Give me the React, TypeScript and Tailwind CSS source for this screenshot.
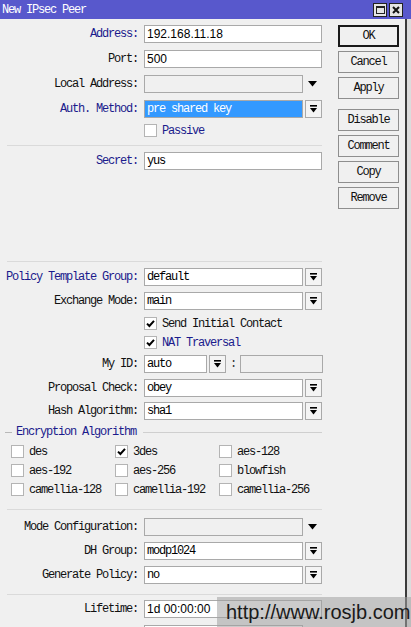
const mono = "font-['Liberation_Mono',monospace] text-[12px] tracking-[-1.2px] leading-none";
const sans = "font-['Liberation_Sans',Arial,sans-serif] text-[12px] leading-none";

function DropIcon() {
  return (
    <svg width="7" height="8" viewBox="0 0 7 8">
      <rect x="0" y="0" width="7" height="1.6" fill="#000" />
      <polygon points="0,3 7,3 3.5,7.6" fill="#000" />
    </svg>
  );
}

function Label({ text, blue }: { text: string; blue?: boolean }) {
  return (
    <div className={`w-[138px] shrink-0 text-right ${mono} ${blue ? "text-[#1b1b8c]" : "text-[#111]"}`}>
      {text}
    </div>
  );
}

function TextBox({ value, font = "mono", w = "w-[178px]", disabled }: { value?: string; font?: "mono" | "sans"; w?: string; disabled?: boolean }) {
  return (
    <div
      className={`${w} h-[18px] shrink-0 border border-[#a9a9a9] flex items-center px-[2px] ${disabled ? "bg-[#f0f0f0]" : "bg-white"} ${font === "mono" ? mono : sans} text-black`}
    >
      {value}
    </div>
  );
}

function Select({ value, w = "w-[159px]", selected }: { value: string; w?: string; selected?: boolean }) {
  return (
    <div className="flex gap-[2px] shrink-0">
      <div
        className={`${w} h-[18px] border border-[#a9a9a9] flex items-center px-[2px] ${mono} ${selected ? "bg-[#3399ff] text-white" : "bg-white text-black"}`}
      >
        {value}
      </div>
      <div className="w-[17px] h-[18px] border border-[#a9a9a9] bg-[#f4f4f4] flex items-center justify-center">
        <DropIcon />
      </div>
    </div>
  );
}

function Check({ checked }: { checked?: boolean }) {
  return (
    <div className="w-[13px] h-[13px] shrink-0 bg-white border border-[#b4b4b4] flex items-center justify-center">
      {checked && (
        <svg width="9" height="9" viewBox="0 0 9 9">
          <path d="M1 4.6 L3.4 7 L8 1.8" stroke="#000" strokeWidth="2" fill="none" />
        </svg>
      )}
    </div>
  );
}

function Field({ label, blue, mt, children }: { label: string; blue?: boolean; mt: string; children: React.ReactNode }) {
  return (
    <div className={`flex items-center h-[18px] shrink-0 ${mt}`}>
      <Label text={label} blue={blue} />
      <div className="ml-[6px] flex items-center">{children}</div>
    </div>
  );
}

function CheckRow({ label, checked, blue, mt }: { label: string; checked?: boolean; blue?: boolean; mt: string }) {
  return (
    <div className={`flex items-center h-[13px] shrink-0 pl-[144px] gap-[5px] ${mt}`}>
      <Check checked={checked} />
      <span className={`${mono} ${blue ? "text-[#1b1b8c]" : "text-[#111]"}`}>{label}</span>
    </div>
  );
}

function Sep({ mt }: { mt: string }) {
  return <div className={`ml-[7px] w-[315px] h-px shrink-0 bg-[#dadada] ${mt}`} />;
}

function Btn({ text, primary, mt }: { text: string; primary?: boolean; mt: string }) {
  return (
    <div
      className={`w-[61px] h-[22px] shrink-0 flex items-center justify-center bg-[#f0f0f0] ${mt} ${primary ? "border-2 border-[#1a1a1a]" : "border border-[#8e8e8e]"} ${mono} text-[#111]`}
    >
      {text}
    </div>
  );
}

const algos: [string, boolean][] = [
  ["des", false], ["3des", true], ["aes-128", false],
  ["aes-192", false], ["aes-256", false], ["blowfish", false],
  ["camellia-128", false], ["camellia-192", false], ["camellia-256", false],
];

export default function App() {
  return (
    <div className="relative w-[411px] h-[627px] overflow-hidden bg-[#f0f0f0]">
      {/* title bar */}
      <div className="h-[19px] bg-[#5858cc] flex items-center pl-[2px]">
        <span className={`${mono} text-white`}>New IPsec Peer</span>
        <div className="ml-auto mr-[8px] flex gap-[2px]">
          <div className="w-[14px] h-[14px] bg-[#e4e4e4] border border-[#222] flex items-center justify-center">
            <div className="w-[9px] h-[8px] border border-[#222] border-t-2" />
          </div>
          <div className="w-[14px] h-[14px] bg-[#e4e4e4] border border-[#222] flex items-center justify-center">
            <svg width="8" height="8" viewBox="0 0 8 8">
              <path d="M1 1 L7 7 M7 1 L1 7" stroke="#111" strokeWidth="2" />
            </svg>
          </div>
        </div>
      </div>

      <div className="flex">
        {/* form */}
        <div className="w-[338px] shrink-0 flex flex-col">
          <Field label="Address:" blue mt="mt-[6px]">
            <TextBox value="192.168.11.18" font="sans" />
          </Field>
          <Field label="Port:" mt="mt-[7px]">
            <TextBox value="500" font="sans" />
          </Field>
          <Field label="Local Address:" mt="mt-[7px]">
            <TextBox w="w-[159px]" disabled />
            <svg className="ml-[5px]" width="9" height="6" viewBox="0 0 9 6">
              <polygon points="0,0 9,0 4.5,5.5" fill="#000" />
            </svg>
          </Field>
          <Field label="Auth. Method:" blue mt="mt-[7px]">
            <Select value="pre shared key" selected />
          </Field>
          <CheckRow label="Passive" blue mt="mt-[6px]" />
          <Sep mt="mt-[8px]" />
          <Field label="Secret:" blue mt="mt-[6px]">
            <TextBox value="yus" />
          </Field>

          <Sep mt="mt-[91px]" />
          <Field label="Policy Template Group:" blue mt="mt-[6px]">
            <Select value="default" />
          </Field>
          <Field label="Exchange Mode:" mt="mt-[6px]">
            <Select value="main" />
          </Field>
          <CheckRow label="Send Initial Contact" checked mt="mt-[7px]" />
          <CheckRow label="NAT Traversal" checked blue mt="mt-[6px]" />
          <Field label="My ID:" mt="mt-[6px]">
            <Select value="auto" w="w-[63px]" />
            <span className={`${mono} text-[#333] ml-[4px] mr-[4px]`}>:</span>
            <TextBox w="w-[83px]" disabled />
          </Field>
          <Field label="Proposal Check:" mt="mt-[6px]">
            <Select value="obey" />
          </Field>
          <Field label="Hash Algorithm:" mt="mt-[5px]">
            <Select value="sha1" />
          </Field>

          <div className="flex items-center h-[12px] shrink-0 mt-[6px]">
            <div className="ml-[5px] w-[7px] h-px bg-[#b8b8b8]" />
            <span className={`${mono} text-[#1b1b8c] ml-[4px]`}>Encryption Algorithm</span>
            <div className="ml-[7px] w-[179px] h-px bg-[#cfcfcf]" />
          </div>
          <div className="grid grid-cols-[104px_104px_104px] shrink-0 pl-[11px] mt-[7px] gap-y-[6px]">
            {algos.map(([name, on]) => (
              <div key={name} className="flex items-center gap-[5px] h-[13px]">
                <Check checked={on} />
                <span className={`${mono} text-[#111]`}>{name}</span>
              </div>
            ))}
          </div>

          <Sep mt="mt-[13px]" />
          <Field label="Mode Configuration:" mt="mt-[8px]">
            <TextBox w="w-[159px]" disabled />
            <svg className="ml-[5px]" width="9" height="6" viewBox="0 0 9 6">
              <polygon points="0,0 9,0 4.5,5.5" fill="#000" />
            </svg>
          </Field>
          <Field label="DH Group:" mt="mt-[6px]">
            <Select value="modp1024" />
          </Field>
          <Field label="Generate Policy:" mt="mt-[6px]">
            <Select value="no" />
          </Field>
          <Sep mt="mt-[10px]" />
          <Field label="Lifetime:" mt="mt-[5px]">
            <TextBox value="1d 00:00:00" font="sans" />
          </Field>
          <Field label="" mt="mt-[7px]">
            <TextBox w="w-[159px]" />
          </Field>
        </div>

        {/* buttons */}
        <div className="w-[61px] shrink-0 flex flex-col">
          <Btn text="OK" primary mt="mt-[6px]" />
          <Btn text="Cancel" mt="mt-[4px]" />
          <Btn text="Apply" mt="mt-[4px]" />
          <Btn text="Disable" mt="mt-[10px]" />
          <Btn text="Comment" mt="mt-[4px]" />
          <Btn text="Copy" mt="mt-[4px]" />
          <Btn text="Remove" mt="mt-[4px]" />
        </div>
        <div className="w-[6px] shrink-0" />
        <div className="w-[2px] shrink-0 bg-[#3a3a3a]" />
        <div className="flex-1 bg-[#dcdcdc]" />
      </div>

      {/* watermark overlay */}
      <div className="absolute left-[217px] top-[597px] w-[194px] h-[30px] bg-[rgba(160,160,160,0.55)] flex items-center pl-[9px]">
        <span className="font-['Liberation_Sans',Arial,sans-serif] text-[20px] leading-none text-[#1a1a1a]">
          http://www.rosjb.com
        </span>
      </div>
    </div>
  );
}
